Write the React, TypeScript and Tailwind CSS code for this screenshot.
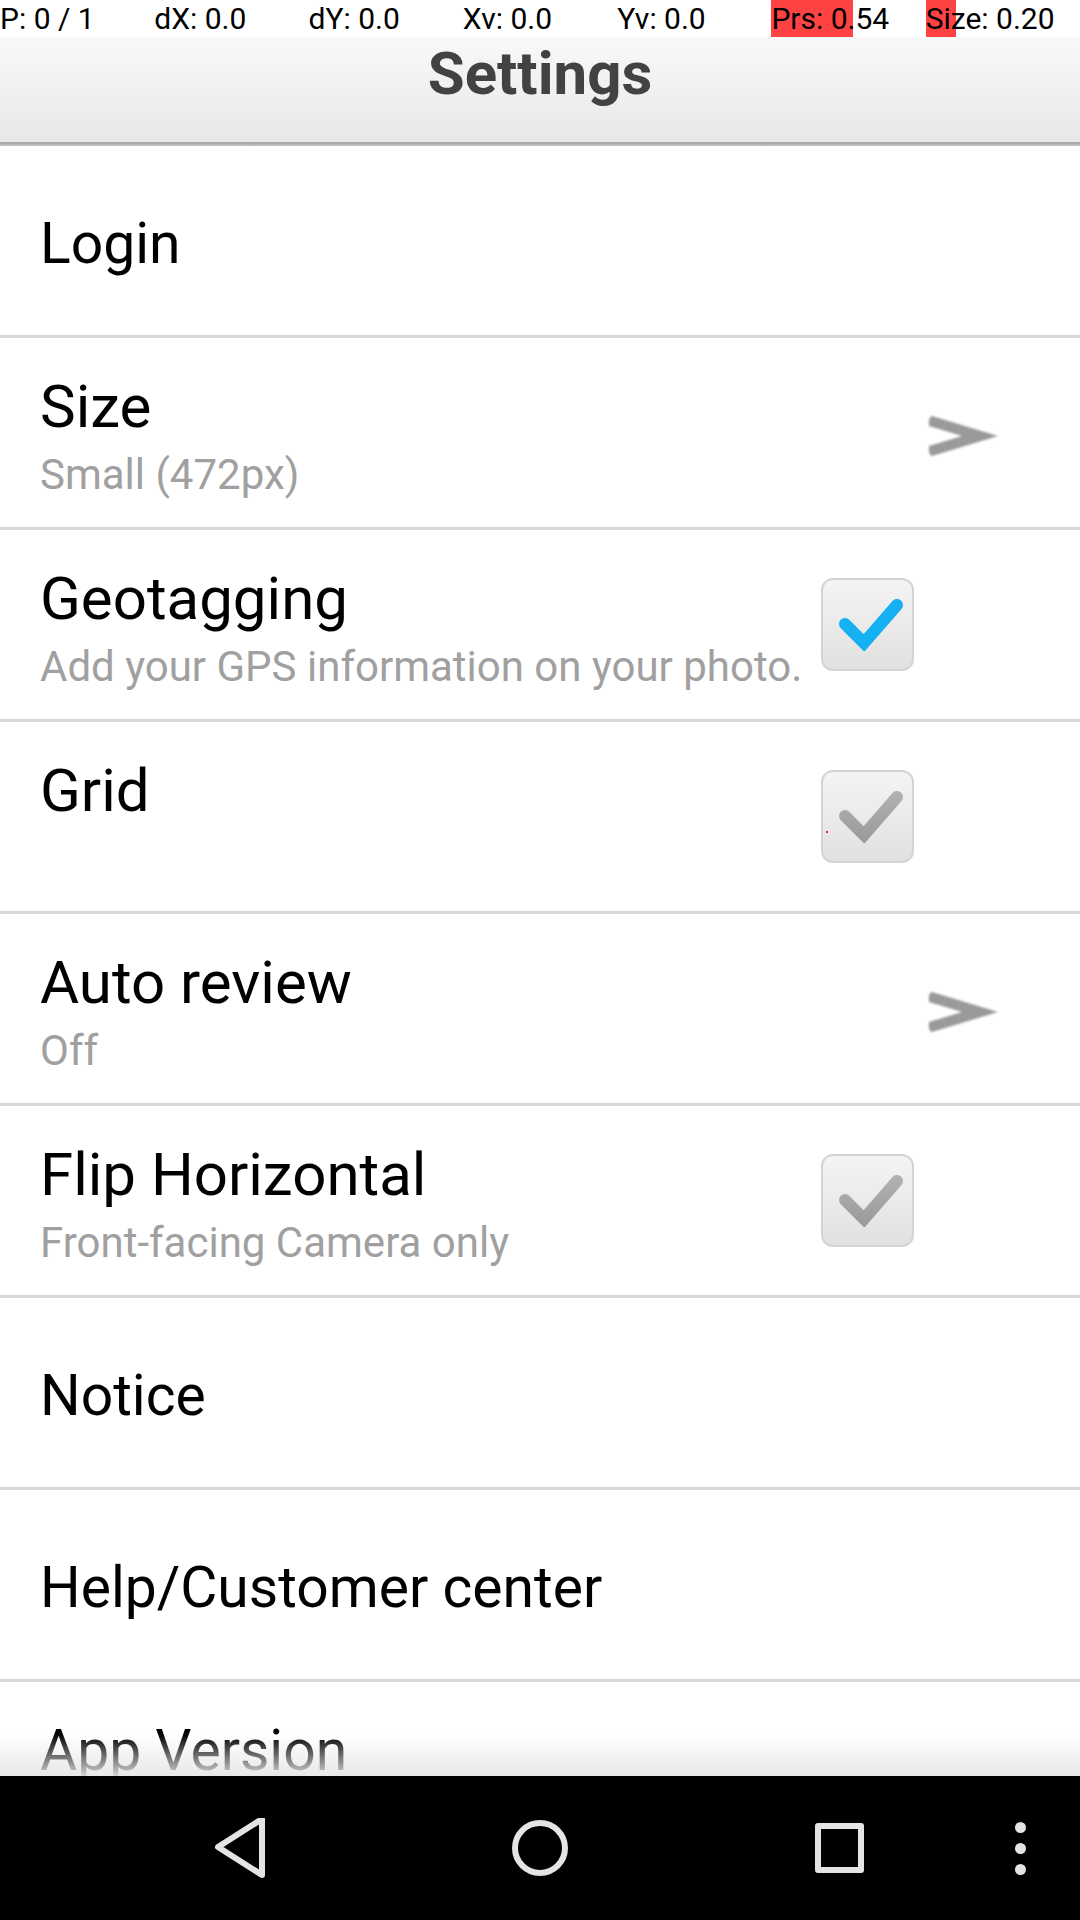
import React from "react";

const font = { fontFamily: "Roboto, 'Noto Sans', sans-serif" };

function Chevron() {
  return (
    <svg width="74" height="44" viewBox="-2 -2 74 44" className="mr-[80px] mt-[6px] shrink-0">
      <defs>
        <filter id="cb" x="-20%" y="-20%" width="140%" height="140%">
          <feGaussianBlur stdDeviation="1.1" />
        </filter>
      </defs>
      <path
        d="M4 0 L70 20 L4 40 Q0 39 1 30 L34 20 L1 10 Q0 1 4 0 Z"
        fill="#9a9a9a"
        filter="url(#cb)"
      />
    </svg>
  );
}

function CheckBox({ checked, dot }: { checked: "blue" | "gray"; dot?: boolean }) {
  return (
    <div className="relative mr-[166px] shrink-0 w-[93px] h-[93px] rounded-[12px] border-2 border-[#d4d4d4] bg-gradient-to-b from-[#f5f4f5] to-[#e1e1e1]">
      <svg width="89" height="89" viewBox="2 2 89 89" className="absolute left-0 top-0">
        <defs>
          <linearGradient id="gg" x1="0" y1="0" x2="0" y2="1">
            <stop offset="0" stopColor="#b0b0b0" />
            <stop offset="1" stopColor="#9c9c9c" />
          </linearGradient>
          <filter id="cf" x="-20%" y="-20%" width="140%" height="140%">
            <feGaussianBlur stdDeviation="0.6" />
          </filter>
        </defs>
        <path
          d="M24 46 L43 65 L76 27"
          fill="none"
          stroke={checked === "blue" ? "#12b1f2" : "url(#gg)"}
          strokeWidth="12"
          strokeLinecap="round"
          strokeLinejoin="miter"
          filter="url(#cf)"
        />
      </svg>
      {dot && <span className="absolute left-[3px] top-[59px] w-[2px] h-[2px] bg-[#ff2020]" />}
    </div>
  );
}

function Row({
  title,
  sub,
  top,
  small,
  right,
}: {
  title: string;
  sub?: string;
  top?: boolean;
  small?: boolean;
  right?: React.ReactNode;
}) {
  return (
    <div className="h-[192px] shrink-0 border-b-[3px] border-[#d8d8d8] flex items-center pl-[40px]">
      <div className={`flex-1 min-w-0 h-full flex flex-col ${top ? "pt-[34px]" : "justify-center pt-[6px]"}`}>
        <div className={`${small ? "text-[57px]" : "text-[60px]"} leading-[70px] text-black whitespace-nowrap`}>{title}</div>
        {sub && <div className="mt-[9px] text-[42px] leading-[48px] text-[#a0a0a0] whitespace-nowrap">{sub}</div>}
      </div>
      {right}
    </div>
  );
}

export default function App() {
  const debug = ["P: 0 / 1", "dX: 0.0", "dY: 0.0", "Xv: 0.0", "Yv: 0.0", "Prs: 0.54", "Size: 0.20"];
  return (
    <div className="w-[1080px] h-[1920px] bg-white flex flex-col overflow-hidden" style={font}>
      <div className="h-[37px] shrink-0 grid grid-cols-7 bg-white">
        {debug.map((t, i) => (
          <div key={i} className="relative h-full flex items-center">
            {i === 5 && <span className="absolute left-0 top-0 h-full w-[82px] bg-[#ff4242]" />}
            {i === 6 && <span className="absolute left-0 top-0 h-full w-[30px] bg-[#ff4242]" />}
            <span className="relative text-[30px] leading-[37px] text-black whitespace-nowrap">{t}</span>
          </div>
        ))}
      </div>
      <div className="h-[105px] shrink-0 bg-gradient-to-b from-[#f9f9f9] to-[#e8e8e8] flex justify-center pt-[2px]">
        <div className="text-[60px] leading-[70px] font-bold text-[#424242]">Settings</div>
      </div>
      <div className="h-[4px] shrink-0 bg-gradient-to-b from-[#a2a2a2] to-[#c4c4c4]" />
      <div className="relative flex-1 min-h-0 overflow-hidden flex flex-col">
        <Row title="Login" small />
        <Row title="Size" sub="Small (472px)" top right={<Chevron />} />
        <Row title="Geotagging" sub="Add your GPS information on your photo." top right={<CheckBox checked="blue" />} />
        <Row title="Grid" top right={<CheckBox checked="gray" dot />} />
        <Row title="Auto review" sub="Off" top right={<Chevron />} />
        <Row title="Flip Horizontal" sub="Front-facing Camera only" top right={<CheckBox checked="gray" />} />
        <Row title="Notice" small />
        <Row title="Help/Customer center" small />
        <Row title="App Version" top small />
        <div className="absolute left-0 right-0 bottom-0 h-[42px] bg-gradient-to-b from-[rgba(232,232,232,0)] to-[rgba(230,230,230,0.92)]" />
      </div>
      <div className="h-[144px] shrink-0 bg-black relative flex items-center">
        <div className="absolute left-[210px] top-[42px]">
          <svg width="60" height="60" viewBox="0 0 60 60">
            <path d="M52 3 L52 59 L8 31 Z" transform="translate(0,-2)" fill="none" stroke="#e4e4e4" strokeWidth="6" strokeLinejoin="round" />
          </svg>
        </div>
        <div className="absolute left-[512px] top-[44px] w-[56px] h-[56px] rounded-full border-[6px] border-[#e4e4e4]" />
        <div className="absolute left-[815px] top-[47px] w-[49px] h-[50px] rounded-[3px] border-[6px] border-[#e4e4e4]" />
        <div className="absolute left-[1015px] top-[46px] flex flex-col gap-[10px]">
          <span className="w-[11px] h-[11px] rounded-full bg-[#e4e4e4]" />
          <span className="w-[11px] h-[11px] rounded-full bg-[#e4e4e4]" />
          <span className="w-[11px] h-[11px] rounded-full bg-[#e4e4e4]" />
        </div>
      </div>
    </div>
  );
}
